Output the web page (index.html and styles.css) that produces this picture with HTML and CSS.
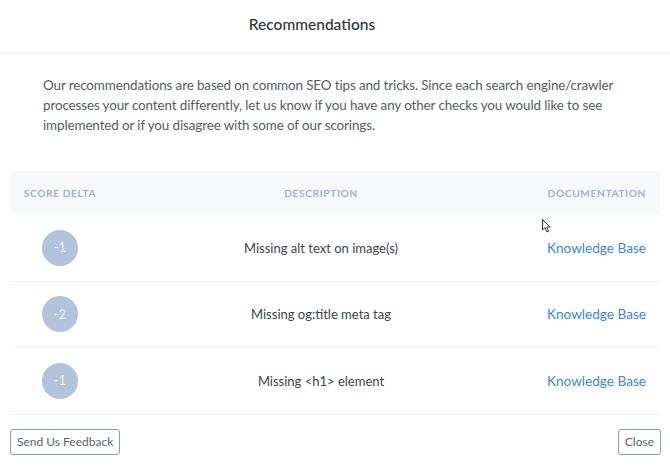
FILE: index.html
```html
<!DOCTYPE html>
<html>
<head>
<meta charset="utf-8">
<link rel="stylesheet" href="styles.css">
</head>
<body>
<div class="modal">
  <header class="modal-header">
    <h1 class="title">Recommendations</h1>
  </header>
  <div class="modal-body">
    <p class="intro">Our recommendations are based on common SEO tips and tricks. Since each search engine/crawler processes your content differently, let us know if you have any other checks you would like to see implemented or if you disagree with some of our scorings.</p>
    <div class="table">
      <div class="row head">
        <div class="c1">Score Delta</div>
        <div class="c2">Description</div>
        <div class="c3">Documentation</div>
      </div>
      <div class="row">
        <div class="c1"><span class="badge">-1</span></div>
        <div class="c2">Missing alt text on image(s)</div>
        <div class="c3"><a class="link">Knowledge Base</a></div>
      </div>
      <div class="row">
        <div class="c1"><span class="badge">-2</span></div>
        <div class="c2">Missing og:title meta tag</div>
        <div class="c3"><a class="link">Knowledge Base</a></div>
      </div>
      <div class="row">
        <div class="c1"><span class="badge">-1</span></div>
        <div class="c2">Missing &lt;h1&gt; element</div>
        <div class="c3"><a class="link">Knowledge Base</a></div>
      </div>
    </div>
  </div>
  <footer class="modal-footer">
    <button class="btn">Send Us Feedback</button>
    <button class="btn">Close</button>
  </footer>
  <svg class="cursor" width="10" height="14" viewBox="0 0 10 14"><path d="M0.5 0.5 L0.5 11 L3 8.6 L5 13 L6.6 12.3 L4.7 8 L8.2 8 Z" fill="#fff" stroke="#333" stroke-width="1"/></svg>
</div>
</body>
</html>
```
FILE: styles.css
```css
* { box-sizing: border-box; }
html, body { margin: 0; padding: 0; background: #fff; }
body {
  font-family: "Lato", "Open Sans", sans-serif;
  color: #4a4f57;
  width: 670px;
  height: 467px;
  overflow: hidden;
}
.modal { position: relative; height: 467px; display: flex; flex-direction: column; }
.modal-header {
  height: 53px;
  border-bottom: 1px solid #eef1f5;
  display: flex;
  align-items: center;
  justify-content: center;
  padding-right: 46px;
}
.title { margin: 0 0 4px; font-size: 15.5px; font-weight: 500; color: #2f3338; }
.modal-body { padding: 0 10px; }
.intro {
  margin: 22px 0 0;
  padding: 0 25px 0 33px;
  font-size: 13.4px;
  letter-spacing: -0.1px;
  line-height: 20px;
  color: #565b62;
}
.table { margin-top: 36px; }
.row {
  display: grid;
  grid-template-columns: 100px 1fr 140px;
  align-items: center;
  height: 66.5px;
  border-bottom: 1px solid #f0f2f5;
  font-size: 13px;
  color: #3d434b;
}
.row.head {
  height: 44px;
  background: #f8f9fb;
  border-bottom: none;
  font-size: 10.2px;
  font-weight: 700;
  letter-spacing: 0.6px;
  text-transform: uppercase;
  color: #a3b1c7;
}
.c1 { text-align: center; }
.c2 { text-align: center; padding-left: 12px; }
.c3 { text-align: right; padding-right: 14px; white-space: nowrap; }
.badge {
  display: inline-flex;
  width: 36px;
  height: 36px;
  border-radius: 50%;
  background: #b4c3dc;
  color: #eef2f8;
  align-items: center;
  justify-content: center;
  font-size: 12.5px;
}
.link { color: #3b86e8; font-size: 13.6px; }
.modal-footer {
  display: flex;
  justify-content: space-between;
  padding: 14px 9px 0 10px;
}
.btn {
  font-family: inherit;
  background: #fff;
  border: 1px solid #8f9ca8;
  border-radius: 3px;
  height: 26px;
  padding: 0 6px;
  font-size: 12px;
  color: #5b646d;
}
.cursor { position: absolute; left: 542px; top: 219px; }
```
